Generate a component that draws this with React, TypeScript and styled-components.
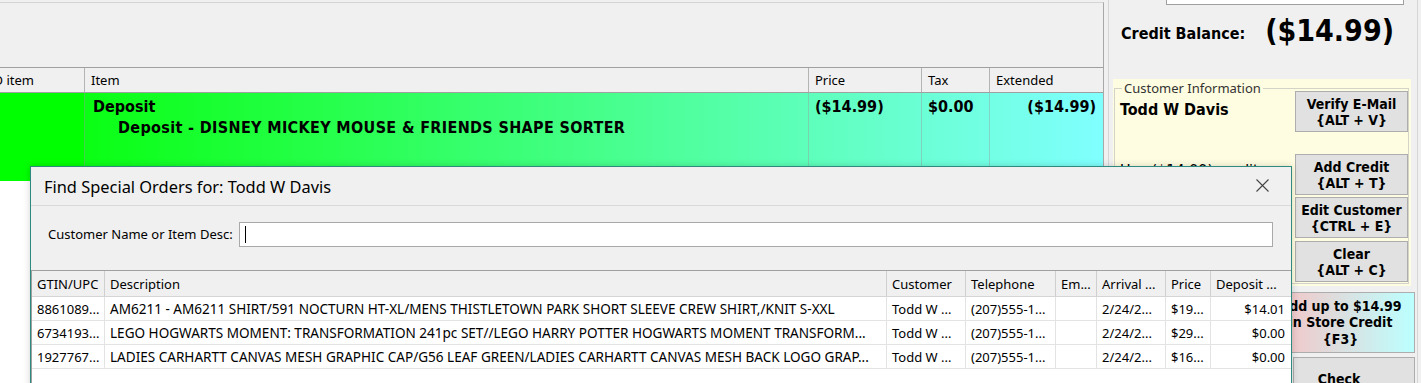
import React from "react";
import styled, { createGlobalStyle } from "styled-components";

const UI_FONT = `"Noto Sans", "Open Sans", "Liberation Sans", sans-serif`;
const BOLD_FONT = `"DejaVu Sans Condensed", "DejaVu Sans", "Liberation Sans", sans-serif`;

const GlobalStyle = createGlobalStyle`
  html, body { margin: 0; padding: 0; background: #f0f0f0; overflow: hidden; }
  * { box-sizing: border-box; }
`;

const Screen = styled.div`
  position: relative;
  width: 1421px;
  height: 383px;
  overflow: hidden;
  display: flex;
  background: #f0f0f0;
  font-family: ${UI_FONT};
  color: #000;
`;

/* ---------- main (left) column ---------- */
const MainColumn = styled.div`
  width: 1104px;
  flex: none;
  display: flex;
  flex-direction: column;
`;

const TopPanel = styled.div`
  flex: none;
  height: 66px;
  margin-top: 2px;
  border-top: 1px solid #d4d4d4;
  border-right: 1px solid #a8a8a8;
  border-bottom: 1px solid #a0a0a0;
`;

const GridArea = styled.div`
  flex: 1;
  background: #fff;
  border-right: 1px solid #a8a8a8;
  display: flex;
  flex-direction: column;
`;

const MainHeader = styled.div`
  height: 25px;
  flex: none;
  display: grid;
  grid-template-columns: 85px 724px 113px 68px 113px;
  background: #f0f0f0;
  border-bottom: 1px solid #a0a0a0;
`;

const MainHeaderCell = styled.div<{ $clipLeft?: boolean }>`
  display: flex;
  align-items: center;
  justify-content: ${(p) => (p.$clipLeft ? "flex-end" : "flex-start")};
  padding: ${(p) => (p.$clipLeft ? "0 50px 0 0" : "0 0 0 6px")};
  overflow: hidden;
  white-space: nowrap;
  font-size: 13px;
  border-right: 1px solid #b4b4b4;
  &:last-child { border-right: none; }
`;

const DepositRow = styled.div`
  height: 88px;
  flex: none;
  display: grid;
  grid-template-columns: 85px 724px 113px 68px 113px;
  background: linear-gradient(90deg, #00ff00 0%, #80ffff 100%);
  font-family: ${BOLD_FONT};
  font-stretch: condensed;
  font-weight: bold;
  font-size: 16px;
  line-height: 21px;
`;

const RowCell = styled.div<{ $align?: "left" | "right"; $solid?: string }>`
  border-right: 1px solid rgba(150, 160, 160, 0.45);
  padding: 3px ${(p) => (p.$align === "right" ? "7px" : "0")} 0
    ${(p) => (p.$align === "right" ? "0" : "6px")};
  text-align: ${(p) => p.$align ?? "left"};
  white-space: nowrap;
  overflow: hidden;
  ${(p) => (p.$solid ? `background: ${p.$solid};` : "")}
  &:last-child { border-right: none; }
`;

const ItemLine = styled.div<{ $indent?: number; $track?: number }>`
  padding-left: ${(p) => p.$indent ?? 2}px;
  letter-spacing: ${(p) => p.$track ?? 0}px;
`;

const Splitter = styled.div`
  width: 5px;
  flex: none;
  border-right: 1px solid #d6d6d6;
`;

/* ---------- right panel ---------- */
const RightPanel = styled.div`
  width: 309px;
  flex: none;
  border-right: 1px solid #d6d6d6;
  display: flex;
  flex-direction: column;
  font-family: ${BOLD_FONT};
  font-stretch: condensed;
  & > * { flex: none; }
`;

const TopField = styled.div`
  margin-left: 57px;
  width: 238px;
  height: 5px;
  background: #fff;
  border: 1px solid #a0a0a0;
  border-top: none;
`;

const CreditRow = styled.div`
  margin-top: 5px;
  height: 40px;
  padding-left: 12px;
  display: flex;
  align-items: center;
  white-space: nowrap;
`;

const CreditLabel = styled.span`
  font-weight: bold;
  font-size: 16px;
  margin-top: 6px;
`;

const CreditAmount = styled.span`
  font-weight: bold;
  font-size: 30px;
  margin-left: 20px;
`;

const YellowBox = styled.div`
  margin-top: 29px;
  margin-left: 4px;
  width: 298px;
  background: #fffde1;
  padding: 9px 2px 2px 1px;
`;

const GroupFrame = styled.div`
  position: relative;
  border: 1px solid #d3d3c8;
  display: flex;
  padding-bottom: 1px;
`;

const GroupLegend = styled.span`
  position: absolute;
  top: -10px;
  left: 7px;
  padding: 0 2px;
  background: #fffde1;
  font-family: ${UI_FONT};
  font-stretch: normal;
  font-size: 13px;
  line-height: 18px;
  color: #333;
`;

const InfoColumn = styled.div`
  flex: 1;
  padding: 11px 0 0 5px;
  overflow: hidden;
`;

const CustomerName = styled.div`
  font-weight: bold;
  font-size: 16px;
  line-height: 20px;
`;

const CreditNote = styled.div`
  margin-top: 41px;
  font-size: 16px;
  line-height: 20px;
  white-space: nowrap;
`;

const ButtonColumn = styled.div`
  width: 113px;
  flex: none;
  display: flex;
  flex-direction: column;
`;

const KeyButton = styled.button<{ $gap: number }>`
  margin-top: ${(p) => p.$gap}px;
  height: 41px;
  flex: none;
  padding: 0;
  background: #e1e1e1;
  border: 1px solid #adadad;
  font-family: ${BOLD_FONT};
  font-stretch: condensed;
  font-weight: bold;
  font-size: 14px;
  line-height: 16px;
  color: #000;
  display: flex;
  flex-direction: column;
  align-items: center;
  justify-content: center;
`;

const StoreCreditButton = styled.button`
  margin-top: 6px;
  margin-left: 157px;
  width: 149px;
  height: 61px;
  padding: 0;
  background: linear-gradient(90deg, #fbbfc0 0%, #bcffff 100%);
  border: 1px solid #adadad;
  font-family: ${BOLD_FONT};
  font-stretch: condensed;
  font-weight: bold;
  font-size: 14px;
  line-height: 16.5px;
  color: #000;
  display: flex;
  flex-direction: column;
  align-items: center;
  justify-content: center;
  white-space: nowrap;
`;

const CheckButton = styled.button`
  margin-top: 4px;
  margin-left: 184px;
  width: 122px;
  height: 60px;
  padding: 13px 30px 0 0;
  background: #e1e1e1;
  border: 1px solid #adadad;
  font-family: ${BOLD_FONT};
  font-stretch: condensed;
  font-weight: bold;
  font-size: 14px;
  line-height: 16px;
  color: #000;
  display: flex;
  flex-direction: column;
  align-items: center;
  justify-content: flex-start;
`;

/* ---------- dialog ---------- */
const Dialog = styled.div`
  position: absolute;
  left: 30px;
  top: 166px;
  width: 1262px;
  height: 240px;
  background: #f0f0f0;
  border: 1px solid #2f8a7e;
  box-shadow: 0 0 7px rgba(0, 0, 0, 0.18);
  display: flex;
  flex-direction: column;
`;

const TitleBar = styled.div`
  height: 39px;
  flex: none;
  display: flex;
  align-items: center;
  justify-content: space-between;
  padding-left: 13px;
  border-bottom: 1px solid #d9d9d9;
`;

const TitleText = styled.span`
  font-size: 16.4px;
  color: #000;
`;

const CloseIcon = styled.svg`
  margin-right: 22px;
  margin-top: -2px;
`;

const SearchPanel = styled.div`
  height: 64px;
  flex: none;
  display: flex;
  align-items: flex-start;
  padding: 16px 0 0 17px;
`;

const SearchLabel = styled.label`
  font-size: 13px;
  line-height: 25px;
  white-space: nowrap;
`;

const SearchInput = styled.div`
  margin-left: 6px;
  width: 1034px;
  height: 25px;
  background: #fff;
  border: 1px solid #a9a9a9;
  display: flex;
  align-items: center;
`;

const Caret = styled.span`
  width: 1px;
  height: 17px;
  margin-left: 5px;
  background: #000;
`;

const OrdersGrid = styled.div`
  flex: 1;
  background: #fff;
  border-top: 1px solid #a0a0a0;
  border-left: 1px solid #a0a0a0;
  display: flex;
  flex-direction: column;
`;

const COLS = "73px 782px 79px 90px 41px 69px 45px 80px";

const OrdersHeader = styled.div`
  height: 26px;
  flex: none;
  display: grid;
  grid-template-columns: ${COLS};
  background: #f0f0f0;
  border-bottom: 1px solid #d5d5d5;
`;

const OrdersHeaderCell = styled.div`
  display: flex;
  align-items: center;
  padding-left: 5px;
  font-size: 13px;
  white-space: nowrap;
  overflow: hidden;
  border-right: 1px solid #cfcfcf;
  &:last-child { border-right: none; }
`;

const OrdersRow = styled.div`
  height: 24px;
  flex: none;
  display: grid;
  grid-template-columns: ${COLS};
  border-bottom: 1px solid #e3e3e3;
`;

const OrdersCell = styled.div<{ $align?: "left" | "right"; $size?: number }>`
  display: flex;
  align-items: center;
  justify-content: ${(p) => (p.$align === "right" ? "flex-end" : "flex-start")};
  padding: 0 6px 0 5px;
  font-size: ${(p) => p.$size ?? 13}px;
  white-space: nowrap;
  overflow: hidden;
  border-right: 1px solid #e3e3e3;
  &:last-child { border-right: none; }
`;

const headers = [
  "GTIN/UPC",
  "Description",
  "Customer",
  "Telephone",
  "Em...",
  "Arrival ...",
  "Price",
  "Deposit ...",
];

const orders = [
  [
    "8861089...",
    "AM6211 - AM6211 SHIRT/591 NOCTURN HT-XL/MENS THISTLETOWN PARK SHORT SLEEVE CREW SHIRT,/KNIT S-XXL",
    "Todd W ...",
    "(207)555-1...",
    "",
    "2/24/2...",
    "$19...",
    "$14.01",
  ],
  [
    "6734193...",
    "LEGO HOGWARTS MOMENT: TRANSFORMATION 241pc SET//LEGO HARRY POTTER HOGWARTS MOMENT TRANSFORM...",
    "Todd W ...",
    "(207)555-1...",
    "",
    "2/24/2...",
    "$29...",
    "$0.00",
  ],
  [
    "1927767...",
    "LADIES CARHARTT CANVAS MESH GRAPHIC CAP/G56 LEAF GREEN/LADIES CARHARTT CANVAS MESH BACK LOGO GRAP...",
    "Todd W ...",
    "(207)555-1...",
    "",
    "2/24/2...",
    "$16...",
    "$0.00",
  ],
];

export default function App() {
  return (
    <>
      <GlobalStyle />
      <Screen>
        <MainColumn>
          <TopPanel />
          <GridArea>
            <MainHeader>
              <MainHeaderCell $clipLeft>UPC/ID item</MainHeaderCell>
              <MainHeaderCell>Item</MainHeaderCell>
              <MainHeaderCell>Price</MainHeaderCell>
              <MainHeaderCell>Tax</MainHeaderCell>
              <MainHeaderCell>Extended</MainHeaderCell>
            </MainHeader>
            <DepositRow>
              <RowCell $solid="#00ff00" />
              <RowCell>
                <ItemLine>Deposit</ItemLine>
                <ItemLine $indent={27} $track={0.35}>
                  Deposit - DISNEY MICKEY MOUSE &amp; FRIENDS SHAPE SORTER
                </ItemLine>
              </RowCell>
              <RowCell>($14.99)</RowCell>
              <RowCell>$0.00</RowCell>
              <RowCell $align="right">($14.99)</RowCell>
            </DepositRow>
          </GridArea>
        </MainColumn>
        <Splitter />
        <RightPanel>
          <TopField />
          <CreditRow>
            <CreditLabel>Credit Balance:</CreditLabel>
            <CreditAmount>($14.99)</CreditAmount>
          </CreditRow>
          <YellowBox>
            <GroupFrame>
              <GroupLegend>Customer Information</GroupLegend>
              <InfoColumn>
                <CustomerName>Todd W Davis</CustomerName>
                <CreditNote>Use ($14.99) credit</CreditNote>
              </InfoColumn>
              <ButtonColumn>
                <KeyButton $gap={2}>
                  <span>Verify E-Mail</span>
                  <span>{"{ALT + V}"}</span>
                </KeyButton>
                <KeyButton $gap={22}>
                  <span>Add Credit</span>
                  <span>{"{ALT + T}"}</span>
                </KeyButton>
                <KeyButton $gap={2}>
                  <span>Edit Customer</span>
                  <span>{"{CTRL + E}"}</span>
                </KeyButton>
                <KeyButton $gap={3}>
                  <span>Clear</span>
                  <span>{"{ALT + C}"}</span>
                </KeyButton>
              </ButtonColumn>
            </GroupFrame>
          </YellowBox>
          <StoreCreditButton>
            <span>Add up to $14.99</span>
            <span>in Store Credit</span>
            <span>{"{F3}"}</span>
          </StoreCreditButton>
          <CheckButton>
            <span>Check</span>
          </CheckButton>
        </RightPanel>

        <Dialog>
          <TitleBar>
            <TitleText>Find Special Orders for: Todd W Davis</TitleText>
            <CloseIcon width="13" height="13" viewBox="0 0 13 13">
              <path
                d="M0.5 0.5 L12.5 12.5 M12.5 0.5 L0.5 12.5"
                stroke="#444"
                strokeWidth="1.1"
                fill="none"
              />
            </CloseIcon>
          </TitleBar>
          <SearchPanel>
            <SearchLabel>Customer Name or Item Desc:</SearchLabel>
            <SearchInput>
              <Caret />
            </SearchInput>
          </SearchPanel>
          <OrdersGrid>
            <OrdersHeader>
              {headers.map((h) => (
                <OrdersHeaderCell key={h}>{h}</OrdersHeaderCell>
              ))}
            </OrdersHeader>
            {orders.map((row, i) => (
              <OrdersRow key={i}>
                {row.map((c, j) => (
                  <OrdersCell
                    key={j}
                    $align={j === 7 ? "right" : "left"}
                    $size={j === 1 ? 13.55 : 13}
                  >
                    {c}
                  </OrdersCell>
                ))}
              </OrdersRow>
            ))}
          </OrdersGrid>
        </Dialog>
      </Screen>
    </>
  );
}
